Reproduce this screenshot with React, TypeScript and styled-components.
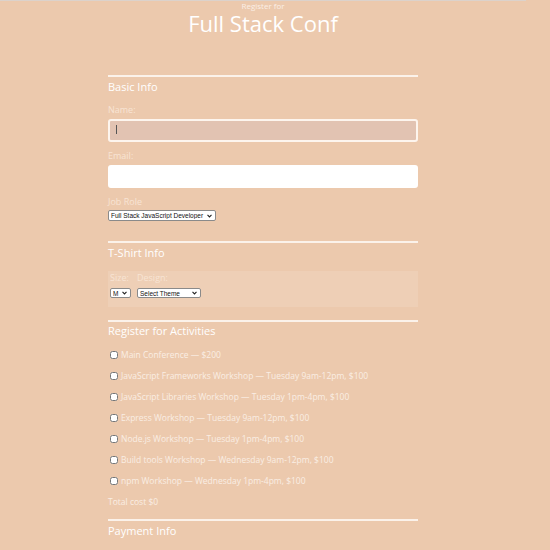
import React from "react";
import styled, { createGlobalStyle } from "styled-components";

const Global = createGlobalStyle`
  html, body { margin: 0; padding: 0; background: #ecc9ad; }
  body { font-family: "Open Sans", "Liberation Sans", sans-serif; }
`;

const Page = styled.div`
  width: 526px;
  min-height: 550px;
  border-top: 1px solid #dcd2cb;
  box-sizing: border-box;
`;

const Header = styled.header`
  text-align: center;
  color: #fff;
`;

const Sub = styled.div`
  font-size: 8px;
  line-height: 9px;
  color: #fbefe6;
`;

const Title = styled.h1`
  margin: 0;
  font-size: 22px;
  line-height: 26px;
  font-weight: 400;
`;

const Form = styled.form`
  width: 310px;
  margin: 39px auto 0;
`;

const Section = styled.section<{ $gap?: number }>`
  border-top: 2px solid #fbf2ea;
  margin-top: ${(p) => p.$gap ?? 0}px;
`;

const Legend = styled.h2<{ $top?: number }>`
  margin: ${(p) => p.$top ?? 3}px 0 0;
  font-size: 11px;
  line-height: 14px;
  font-weight: 400;
  color: #fff;
`;

const Label = styled.label<{ $top?: number }>`
  display: block;
  margin-top: ${(p) => p.$top ?? 9}px;
  font-size: 9px;
  line-height: 10px;
  color: #f8e4d4;
`;

const Input = styled.input<{ $focus?: boolean }>`
  display: block;
  box-sizing: border-box;
  width: 100%;
  height: 23px;
  margin-top: 4px;
  border: 2px solid ${(p) => (p.$focus ? "#fdf5ee" : "#fff")};
  border-radius: 3px;
  background: ${(p) => (p.$focus ? "#e2c3b2" : "#fff")};
  outline: none;
  padding: 0 6px;
  font-size: 10px;
`;

const Caret = styled.span`
  position: absolute;
  left: 8px;
  top: 6px;
  width: 1px;
  height: 9px;
  background: #555;
`;

const InputWrap = styled.div`
  position: relative;
`;

const SelectBox = styled.div<{ $w: number; $top?: number; $h?: number }>`
  position: relative;
  box-sizing: border-box;
  width: ${(p) => p.$w}px;
  height: ${(p) => p.$h ?? 11}px;
  margin-top: ${(p) => p.$top ?? 3}px;
  border: 1px solid #8a8a8a;
  border-radius: 2px;
  background: #fff;
`;

const NativeSelect = styled.select`
  appearance: none;
  -webkit-appearance: none;
  display: block;
  width: 100%;
  height: 100%;
  border: 0;
  margin: 0;
  padding: 0 0 0 2px;
  background: transparent;
  font-family: "Liberation Sans", Arial, sans-serif;
  font-size: 6.5px;
  color: #111;
  outline: none;
`;

const Chevron = styled.svg`
  position: absolute;
  right: 3px;
  top: 50%;
  width: 5px;
  height: 4px;
  margin-top: -2px;
  pointer-events: none;
`;

const ShirtBox = styled.div`
  margin-top: 11px;
  height: 36px;
  box-sizing: border-box;
  padding: 2px 2px 0;
  background: #eecfb6;
  display: flex;
  gap: 6px;
`;

const ShirtCol = styled.div`
  display: flex;
  flex-direction: column;
`;

const ShirtLabel = styled.span`
  font-size: 9px;
  line-height: 10px;
  color: #f8e4d4;
`;

const Activities = styled.div`
  margin-top: 6px;
`;

const Row = styled.label`
  display: flex;
  align-items: center;
  height: 21px;
  font-size: 8.5px;
  color: #faeee4;
`;

const Check = styled.input`
  width: 8px;
  height: 8px;
  margin: 0 3px 0 2px;
`;

const Total = styled.div`
  margin-top: 6px;
  font-size: 8.5px;
  line-height: 10px;
  color: #faeee4;
`;

const activities = [
  "Main Conference — $200",
  "JavaScript Frameworks Workshop — Tuesday 9am-12pm, $100",
  "JavaScript Libraries Workshop — Tuesday 1pm-4pm, $100",
  "Express Workshop — Tuesday 9am-12pm, $100",
  "Node.js Workshop — Tuesday 1pm-4pm, $100",
  "Build tools Workshop — Wednesday 9am-12pm, $100",
  "npm Workshop — Wednesday 1pm-4pm, $100",
];

function Dropdown({
  w,
  top,
  h,
  text,
}: {
  w: number;
  top?: number;
  h?: number;
  text: string;
}) {
  return (
    <SelectBox $w={w} $top={top} $h={h}>
      <NativeSelect defaultValue={text}>
        <option value={text}>{text}</option>
      </NativeSelect>
      <Chevron viewBox="0 0 5 4">
        <path d="M0.5 0.8 L2.5 2.9 L4.5 0.8" fill="none" stroke="#222" strokeWidth="1.1" />
      </Chevron>
    </SelectBox>
  );
}

export default function App() {
  return (
    <Page>
      <Global />
      <Header>
        <Sub>Register for</Sub>
        <Title>Full Stack Conf</Title>
      </Header>
      <Form onSubmit={(e) => e.preventDefault()}>
        <Section>
          <Legend>Basic Info</Legend>
          <Label $top={11}>Name:</Label>
          <InputWrap>
            <Input $focus />
            <Caret />
          </InputWrap>
          <Label>Email:</Label>
          <Input />
          <Label>Job Role</Label>
          <Dropdown w={108} text="Full Stack JavaScript Developer" />
        </Section>
        <Section $gap={20}>
          <Legend>T-Shirt Info</Legend>
          <ShirtBox>
            <ShirtCol>
              <ShirtLabel>Size:</ShirtLabel>
              <Dropdown w={21} top={5} h={10} text="M" />
            </ShirtCol>
            <ShirtCol>
              <ShirtLabel>Design:</ShirtLabel>
              <Dropdown w={64} top={5} h={10} text="Select Theme" />
            </ShirtCol>
          </ShirtBox>
        </Section>
        <Section $gap={13}>
          <Legend $top={2}>Register for Activities</Legend>
          <Activities>
            {activities.map((a) => (
              <Row key={a}>
                <Check type="checkbox" />
                {a}
              </Row>
            ))}
          </Activities>
          <Total>Total cost $0</Total>
        </Section>
        <Section $gap={12}>
          <Legend>Payment Info</Legend>
        </Section>
      </Form>
    </Page>
  );
}
